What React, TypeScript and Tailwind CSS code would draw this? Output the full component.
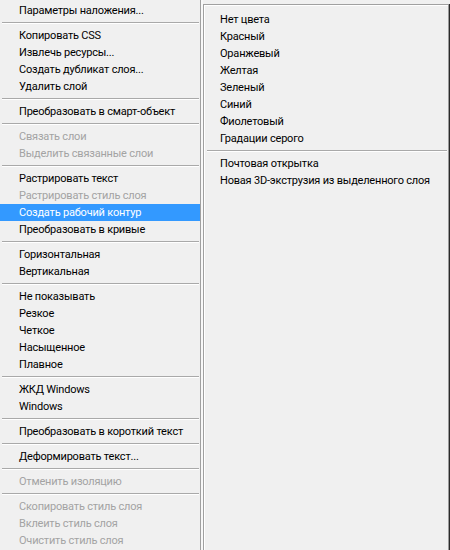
type Item = { label: string; disabled?: boolean; active?: boolean } | "sep";

const leftItems: Item[] = [
  { label: "Параметры наложения..." },
  "sep",
  { label: "Копировать CSS" },
  { label: "Извлечь ресурсы..." },
  { label: "Создать дубликат слоя..." },
  { label: "Удалить слой" },
  "sep",
  { label: "Преобразовать в смарт-объект" },
  "sep",
  { label: "Связать слои", disabled: true },
  { label: "Выделить связанные слои", disabled: true },
  "sep",
  { label: "Растрировать текст" },
  { label: "Растрировать стиль слоя", disabled: true },
  { label: "Создать рабочий контур", active: true },
  { label: "Преобразовать в кривые" },
  "sep",
  { label: "Горизонтальная" },
  { label: "Вертикальная" },
  "sep",
  { label: "Не показывать" },
  { label: "Резкое" },
  { label: "Четкое" },
  { label: "Насыщенное" },
  { label: "Плавное" },
  "sep",
  { label: "ЖКД Windows" },
  { label: "Windows" },
  "sep",
  { label: "Преобразовать в короткий текст" },
  "sep",
  { label: "Деформировать текст..." },
  "sep",
  { label: "Отменить изоляцию", disabled: true },
  "sep",
  { label: "Скопировать стиль слоя", disabled: true },
  { label: "Вклеить стиль слоя", disabled: true },
  { label: "Очистить стиль слоя", disabled: true },
];

const rightItems: Item[] = [
  { label: "Нет цвета" },
  { label: "Красный" },
  { label: "Оранжевый" },
  { label: "Желтая" },
  { label: "Зеленый" },
  { label: "Синий" },
  { label: "Фиолетовый" },
  { label: "Градации серого" },
  "sep",
  { label: "Почтовая открытка" },
  { label: "Новая 3D-экструзия из выделенного слоя" },
];

function MenuList({ items, indent }: { items: Item[]; indent: string }) {
  return (
    <ul className="flex flex-col">
      {items.map((item, i) =>
        item === "sep" ? (
          <li key={i} className="h-[8px] flex flex-col justify-center pl-[2px] pr-[1px]">
            <div className="h-px bg-[#a9a9a9]" />
            <div className="h-px bg-white" />
          </li>
        ) : (
          <li
            key={i}
            className={`h-[17px] leading-[17px] whitespace-nowrap ${indent} ${
              item.active
                ? "bg-[#3399ff] text-white"
                : item.disabled
                ? "text-[#a3a3a3]"
                : "text-black"
            }`}
          >
            {item.label}
          </li>
        )
      )}
    </ul>
  );
}

export default function App() {
  return (
    <div
      className="w-[450px] h-[550px] overflow-hidden bg-[#f0f0f0] flex text-[11px] tracking-[-0.2px]"
      style={{ fontFamily: 'Roboto, "Liberation Sans", sans-serif' }}
    >
      <div className="w-[201px] shrink-0 border-r border-[#a0a0a0] pt-[2px] overflow-hidden">
        <MenuList items={leftItems} indent="pl-[19px]" />
      </div>
      <div className="w-[2px] shrink-0 bg-[#f8f8f8]" />
      <div className="flex-1 min-w-0 mt-[4px] flex">
        <div className="flex-1 min-w-0 border-t border-l border-[#a0a0a0]">
          <div className="h-full border-t border-l border-white pt-[5px] overflow-hidden">
            <MenuList items={rightItems} indent="pl-[15px]" />
          </div>
        </div>
        <div className="w-px shrink-0 bg-[#9a9a9a]" />
        <div className="w-px shrink-0 bg-[#2a2a2a]" />
      </div>
    </div>
  );
}
